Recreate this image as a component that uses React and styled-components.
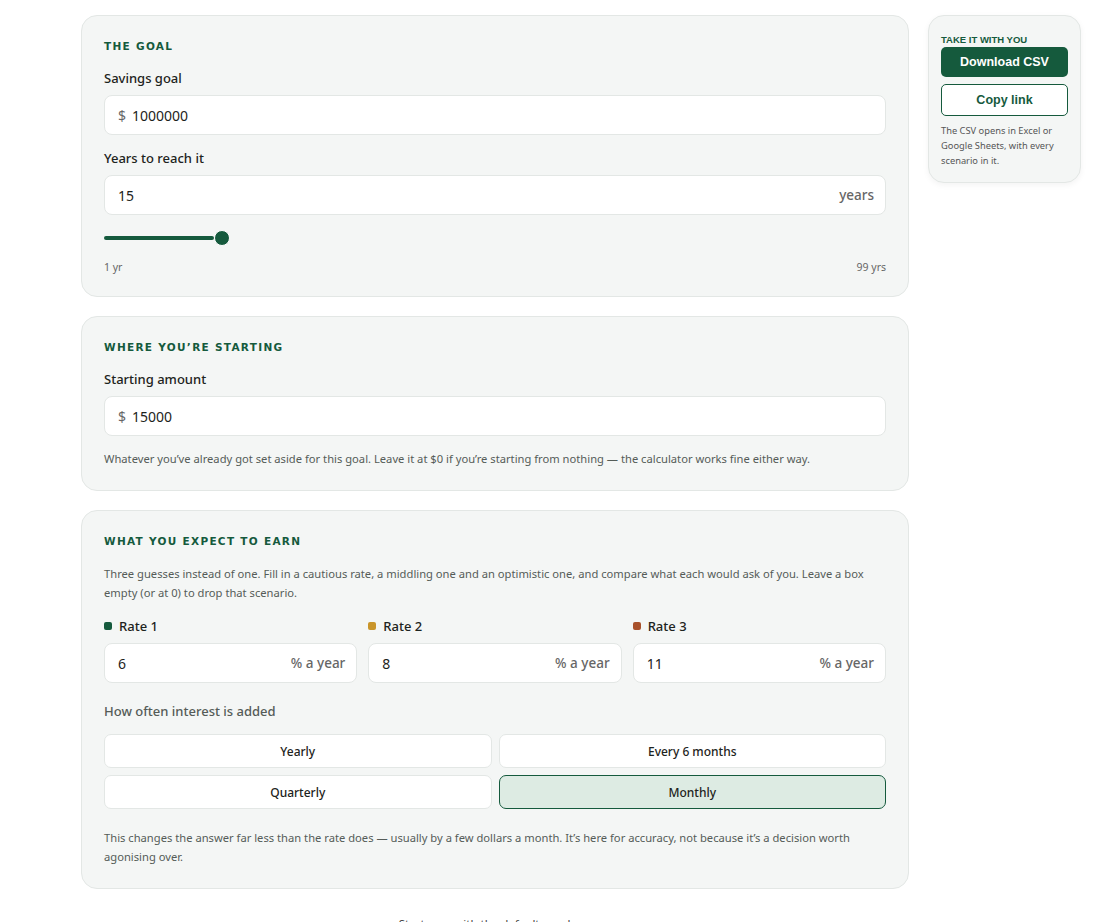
import React from "react";
import styled, { createGlobalStyle } from "styled-components";

const G = createGlobalStyle`
  body{margin:0;background:#fff;font-family:"Noto Sans","Open Sans",sans-serif;color:#1d2320;}
  *{box-sizing:border-box;}
`;
const Page = styled.div`display:flex;gap:19px;padding:15px 0 0 81px;align-items:flex-start;`;
const Main = styled.div`width:828px;display:flex;flex-direction:column;gap:19px;`;
const Card = styled.section`background:#f4f6f5;border:1px solid #e3e7e5;border-radius:16px;padding:24px 22px 22px;`;
const H = styled.h2`margin:0 0 17px;font:700 10.5px "DejaVu Sans",sans-serif;letter-spacing:1.3px;color:#155a3d;text-transform:uppercase;`;
const Label = styled.div`font-size:13px;font-weight:500;margin:0 0 8px;color:${p=>p.$muted?"#555c58":"#1d2320"};display:flex;align-items:center;gap:7px;`;
const Field = styled.div`display:flex;align-items:center;height:40px;background:#fff;border:1px solid #e3e7e5;border-radius:8px;padding:0 11px 0 13px;font-size:14px;margin-bottom:${p=>p.$mb||0}px;`;
const Pre = styled.span`color:#666;margin-right:6px;`;
const Val = styled.span`flex:1;`;
const Suf = styled.span`color:#666;font-size:13.5px;font-weight:500;`;
const Slider = styled.div`position:relative;height:16px;margin:15px 0 14px;`;
const Track = styled.div`position:absolute;left:0;top:6px;height:4px;border-radius:2px;background:#155a3d;`;
const Thumb = styled.div`position:absolute;top:0;width:16px;height:16px;border-radius:50%;background:#155a3d;border:1px solid #fff;`;
const Ends = styled.div`display:flex;justify-content:space-between;font-size:10.5px;color:#666;`;
const Note = styled.p`margin:${p=>p.$m||"0"};font-size:11.2px;line-height:19px;color:#555c58;`;
const Rates = styled.div`display:grid;grid-template-columns:repeat(3,1fr);gap:11px;margin:15px 0 19px;`;
const Dot = styled.span`width:8px;height:8px;border-radius:2px;background:${p=>p.$c};`;
const Opts = styled.div`display:grid;grid-template-columns:1fr 1fr;gap:7px;margin:14px 0 19px;`;
const Opt = styled.div`height:34px;display:flex;align-items:center;justify-content:center;border-radius:7px;font-size:12px;font-weight:500;border:1px solid ${p=>p.$on?"#155a3d":"#e3e7e5"};background:${p=>p.$on?"#ddebe3":"#fff"};`;
const Reset = styled.a`align-self:center;font-size:11.5px;color:#444;text-decoration:underline;margin:8px 0 10px;`;
const Side = styled.aside`width:153px;background:#f4f6f5;border:1px solid #e3e7e5;border-radius:16px;padding:18px 12px 14px;box-shadow:0 2px 6px rgba(0,0,0,.05);font-family:"Liberation Sans",Arial,sans-serif;`;
const SH = styled.div`font-size:9.5px;font-weight:700;color:#155a3d;margin-bottom:2px;`;
const Btn = styled.div`height:30px;border-radius:5px;display:flex;align-items:center;justify-content:center;font-size:12.5px;font-weight:700;margin-bottom:7px;${p=>p.$primary?"background:#155a3d;color:#fff;":"background:#fff;color:#155a3d;border:1px solid #155a3d;height:32px;"}`;
const SN = styled.p`margin:7px 0 0;font:9.3px/15px "Noto Sans",sans-serif;color:#555;`;

export default function App(){
  return <><G/><Page>
    <Main>
      <Card>
        <H>The goal</H>
        <Label>Savings goal</Label>
        <Field $mb={14}><Pre>$</Pre><Val>1000000</Val></Field>
        <Label>Years to reach it</Label>
        <Field><Val>15</Val><Suf>years</Suf></Field>
        <Slider><Track style={{width:110}}/><Thumb style={{left:110}}/></Slider>
        <Ends><span>1 yr</span><span>99 yrs</span></Ends>
      </Card>
      <Card>
        <H>Where you’re starting</H>
        <Label>Starting amount</Label>
        <Field><Pre>$</Pre><Val>15000</Val></Field>
        <Note $m="13px 0 0">Whatever you’ve already got set aside for this goal. Leave it at $0 if you’re starting from nothing — the calculator works fine either way.</Note>
      </Card>
      <Card>
        <H>What you expect to earn</H>
        <Note>Three guesses instead of one. Fill in a cautious rate, a middling one and an optimistic one, and compare what each would ask of you. Leave a box empty (or at 0) to drop that scenario.</Note>
        <Rates>
          {[["Rate 1","6","#155a3d"],["Rate 2","8","#c9952a"],["Rate 3","11","#a8512b"]].map(([l,v,c])=>
            <div key={l}><Label><Dot $c={c}/>{l}</Label><Field><Val>{v}</Val><Suf>% a year</Suf></Field></div>)}
        </Rates>
        <Label $muted>How often interest is added</Label>
        <Opts>
          <Opt>Yearly</Opt><Opt>Every 6 months</Opt><Opt>Quarterly</Opt><Opt $on>Monthly</Opt>
        </Opts>
        <Note>This changes the answer far less than the rate does — usually by a few dollars a month. It’s here for accuracy, not because it’s a decision worth agonising over.</Note>
      </Card>
      <Reset>Start over with the default numbers</Reset>
    </Main>
    <Side>
      <SH>TAKE IT WITH YOU</SH>
      <Btn $primary>Download CSV</Btn>
      <Btn>Copy link</Btn>
      <SN>The CSV opens in Excel or Google Sheets, with every scenario in it.</SN>
    </Side>
  </Page></>;
}
